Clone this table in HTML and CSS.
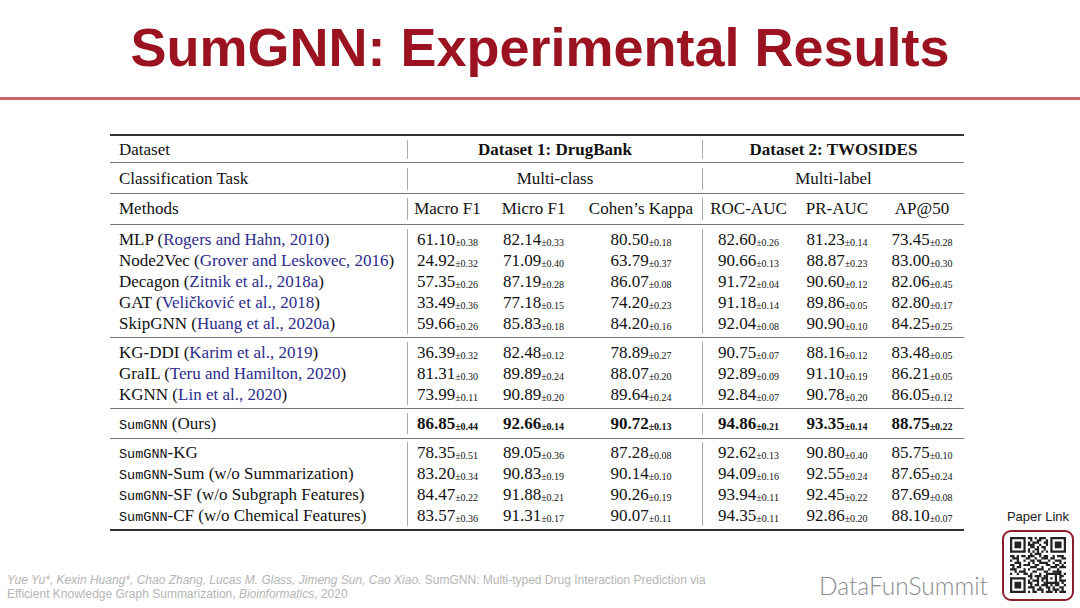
FILE: index.html
```html
<!DOCTYPE html>
<html lang="en">
<head>
<meta charset="utf-8">
<title>SumGNN: Experimental Results</title>
<link rel="stylesheet" href="styles.css">
</head>
<body>
<header class="head"><h1>SumGNN: Experimental Results</h1></header>
<div class="stage">
  <main class="main">
    <div class="tbl">
      <div class="sec sa">
        <div class="m">Dataset</div>
        <div class="span3 b"><b>Dataset 1: DrugBank</b></div>
        <div class="span3 b"><b>Dataset 2: TWOSIDES</b></div>
      </div>
      <div class="sec sb">
        <div class="m">Classification Task</div>
        <div class="span3 b">Multi-class</div>
        <div class="span3 b">Multi-label</div>
      </div>
      <div class="sec sc">
        <div class="m">Methods</div>
        <div class="b">Macro F1</div><div>Micro F1</div><div>Cohen’s Kappa</div>
        <div class="b">ROC-AUC</div><div>PR-AUC</div><div>AP@50</div>
      </div>
      <div class="sec sd">
        <div class="m">MLP (<span class="ref">Rogers and Hahn, 2010</span>)</div>
        <div class="b">61.10<span class="pm">±0.38</span></div><div>82.14<span class="pm">±0.33</span></div><div>80.50<span class="pm">±0.18</span></div>
        <div class="b">82.60<span class="pm">±0.26</span></div><div>81.23<span class="pm">±0.14</span></div><div>73.45<span class="pm">±0.28</span></div>

        <div class="m">Node2Vec (<span class="ref">Grover and Leskovec, 2016</span>)</div>
        <div class="b">24.92<span class="pm">±0.32</span></div><div>71.09<span class="pm">±0.40</span></div><div>63.79<span class="pm">±0.37</span></div>
        <div class="b">90.66<span class="pm">±0.13</span></div><div>88.87<span class="pm">±0.23</span></div><div>83.00<span class="pm">±0.30</span></div>

        <div class="m">Decagon (<span class="ref">Zitnik et al., 2018a</span>)</div>
        <div class="b">57.35<span class="pm">±0.26</span></div><div>87.19<span class="pm">±0.28</span></div><div>86.07<span class="pm">±0.08</span></div>
        <div class="b">91.72<span class="pm">±0.04</span></div><div>90.60<span class="pm">±0.12</span></div><div>82.06<span class="pm">±0.45</span></div>

        <div class="m">GAT (<span class="ref">Veličković et al., 2018</span>)</div>
        <div class="b">33.49<span class="pm">±0.36</span></div><div>77.18<span class="pm">±0.15</span></div><div>74.20<span class="pm">±0.23</span></div>
        <div class="b">91.18<span class="pm">±0.14</span></div><div>89.86<span class="pm">±0.05</span></div><div>82.80<span class="pm">±0.17</span></div>

        <div class="m">SkipGNN (<span class="ref">Huang et al., 2020a</span>)</div>
        <div class="b">59.66<span class="pm">±0.26</span></div><div>85.83<span class="pm">±0.18</span></div><div>84.20<span class="pm">±0.16</span></div>
        <div class="b">92.04<span class="pm">±0.08</span></div><div>90.90<span class="pm">±0.10</span></div><div>84.25<span class="pm">±0.25</span></div>
      </div>
      <div class="sec se">
        <div class="m">KG-DDI (<span class="ref">Karim et al., 2019</span>)</div>
        <div class="b">36.39<span class="pm">±0.32</span></div><div>82.48<span class="pm">±0.12</span></div><div>78.89<span class="pm">±0.27</span></div>
        <div class="b">90.75<span class="pm">±0.07</span></div><div>88.16<span class="pm">±0.12</span></div><div>83.48<span class="pm">±0.05</span></div>

        <div class="m">GraIL (<span class="ref">Teru and Hamilton, 2020</span>)</div>
        <div class="b">81.31<span class="pm">±0.30</span></div><div>89.89<span class="pm">±0.24</span></div><div>88.07<span class="pm">±0.20</span></div>
        <div class="b">92.89<span class="pm">±0.09</span></div><div>91.10<span class="pm">±0.19</span></div><div>86.21<span class="pm">±0.05</span></div>

        <div class="m">KGNN (<span class="ref">Lin et al., 2020</span>)</div>
        <div class="b">73.99<span class="pm">±0.11</span></div><div>90.89<span class="pm">±0.20</span></div><div>89.64<span class="pm">±0.24</span></div>
        <div class="b">92.84<span class="pm">±0.07</span></div><div>90.78<span class="pm">±0.20</span></div><div>86.05<span class="pm">±0.12</span></div>
      </div>
      <div class="sec sf">
        <div class="m"><span class="tt">SumGNN</span> (Ours)</div>
        <div class="b v">86.85<span class="pm">±0.44</span></div><div class="v">92.66<span class="pm">±0.14</span></div><div class="v">90.72<span class="pm">±0.13</span></div>
        <div class="b v">94.86<span class="pm">±0.21</span></div><div class="v">93.35<span class="pm">±0.14</span></div><div class="v">88.75<span class="pm">±0.22</span></div>
      </div>
      <div class="sec sg">
        <div class="m"><span class="tt">SumGNN</span>-KG</div>
        <div class="b">78.35<span class="pm">±0.51</span></div><div>89.05<span class="pm">±0.36</span></div><div>87.28<span class="pm">±0.08</span></div>
        <div class="b">92.62<span class="pm">±0.13</span></div><div>90.80<span class="pm">±0.40</span></div><div>85.75<span class="pm">±0.10</span></div>

        <div class="m"><span class="tt">SumGNN</span>-Sum (w/o Summarization)</div>
        <div class="b">83.20<span class="pm">±0.34</span></div><div>90.83<span class="pm">±0.19</span></div><div>90.14<span class="pm">±0.10</span></div>
        <div class="b">94.09<span class="pm">±0.16</span></div><div>92.55<span class="pm">±0.24</span></div><div>87.65<span class="pm">±0.24</span></div>

        <div class="m"><span class="tt">SumGNN</span>-SF (w/o Subgraph Features)</div>
        <div class="b">84.47<span class="pm">±0.22</span></div><div>91.88<span class="pm">±0.21</span></div><div>90.26<span class="pm">±0.19</span></div>
        <div class="b">93.94<span class="pm">±0.11</span></div><div>92.45<span class="pm">±0.22</span></div><div>87.69<span class="pm">±0.08</span></div>

        <div class="m"><span class="tt">SumGNN</span>-CF (w/o Chemical Features)</div>
        <div class="b">83.57<span class="pm">±0.36</span></div><div>91.31<span class="pm">±0.17</span></div><div>90.07<span class="pm">±0.11</span></div>
        <div class="b">94.35<span class="pm">±0.11</span></div><div>92.86<span class="pm">±0.20</span></div><div>88.10<span class="pm">±0.07</span></div>
      </div>
    </div>
    <footer class="foot">
      <p class="cite"><i>Yue Yu*, Kexin Huang*, Chao Zhang, Lucas M. Glass, Jimeng Sun, Cao Xiao.</i> SumGNN: Multi-typed Drug Interaction Prediction via<br>Efficient Knowledge Graph Summarization, <i>Bioinformatics</i>, 2020</p>
      <div class="brand">DataFunSummit</div>
    </footer>
  </main>
  <aside class="link">
    <div class="plabel">Paper Link</div>
    <div class="qr">
      <svg width="56" height="56" viewBox="0 0 25 25" aria-hidden="true">
        <path fill="#222" fill-rule="evenodd" d="M0 0h7v7h-7zM1 1v5h5v-5zM2 2h3v3h-3zM18 0h7v7h-7zM19 1v5h5v-5zM20 2h3v3h-3zM0 18h7v7h-7zM1 19v5h5v-5zM2 20h3v3h-3zM16 16h5v5h-5zM17 17v3h3v-3zM18 18h1v1h-1z"/>
        <path fill="#222" d="M8 0h2v1h-2zM11 0h1v1h-1zM13 0h3v1h-3zM9 1h1v1h-1zM12 1h2v1h-2zM16 1h1v1h-1zM8 2h1v1h-1zM10 2h3v1h-3zM15 2h2v1h-2zM8 3h3v1h-3zM13 3h1v1h-1zM16 3h1v1h-1zM9 4h2v1h-2zM12 4h1v1h-1zM14 4h2v1h-2zM8 5h1v1h-1zM11 5h2v1h-2zM15 5h1v1h-1zM8 6h1v1h-1zM10 6h1v1h-1zM12 6h1v1h-1zM14 6h1v1h-1zM16 6h1v1h-1zM9 7h1v1h-1zM11 7h3v1h-3zM0 8h2v1h-2zM3 8h1v1h-1zM5 8h2v1h-2zM8 8h3v1h-3zM13 8h1v1h-1zM15 8h2v1h-2zM19 8h1v1h-1zM21 8h3v1h-3zM1 9h3v1h-3zM7 9h2v1h-2zM11 9h1v1h-1zM14 9h3v1h-3zM18 9h2v1h-2zM23 9h2v1h-2zM0 10h1v1h-1zM3 10h1v1h-1zM6 10h1v1h-1zM9 10h2v1h-2zM12 10h2v1h-2zM17 10h1v1h-1zM20 10h3v1h-3zM2 11h3v1h-3zM8 11h1v1h-1zM10 11h1v1h-1zM13 11h4v1h-4zM19 11h1v1h-1zM22 11h1v1h-1zM24 11h1v1h-1zM0 12h2v1h-2zM4 12h1v1h-1zM6 12h3v1h-3zM11 12h2v1h-2zM16 12h2v1h-2zM20 12h2v1h-2zM23 12h1v1h-1zM1 13h1v1h-1zM3 13h2v1h-2zM9 13h3v1h-3zM14 13h1v1h-1zM18 13h3v1h-3zM22 13h3v1h-3zM0 14h3v1h-3zM6 14h1v1h-1zM8 14h1v1h-1zM12 14h3v1h-3zM17 14h1v1h-1zM21 14h1v1h-1zM2 15h1v1h-1zM4 15h3v1h-3zM10 15h2v1h-2zM15 15h2v1h-2zM19 15h4v1h-4zM0 16h1v1h-1zM3 16h1v1h-1zM6 16h2v1h-2zM9 16h1v1h-1zM13 16h1v1h-1zM21 16h2v1h-2zM24 16h1v1h-1zM8 17h2v1h-2zM11 17h3v1h-3zM15 17h1v1h-1zM22 17h2v1h-2zM9 18h1v1h-1zM12 18h1v1h-1zM14 18h2v1h-2zM22 18h1v1h-1zM8 19h1v1h-1zM10 19h3v1h-3zM14 19h1v1h-1zM22 19h3v1h-3zM8 20h2v1h-2zM12 20h1v1h-1zM15 20h1v1h-1zM21 20h1v1h-1zM23 20h1v1h-1zM9 21h1v1h-1zM11 21h2v1h-2zM14 21h3v1h-3zM18 21h1v1h-1zM20 21h2v1h-2zM24 21h1v1h-1zM8 22h3v1h-3zM13 22h1v1h-1zM16 22h2v1h-2zM19 22h1v1h-1zM22 22h2v1h-2zM10 23h1v1h-1zM12 23h3v1h-3zM17 23h1v1h-1zM19 23h3v1h-3zM23 23h1v1h-1zM8 24h1v1h-1zM10 24h2v1h-2zM14 24h1v1h-1zM16 24h3v1h-3zM20 24h1v1h-1zM22 24h3v1h-3z"/>
      </svg>
    </div>
  </aside>
</div>
</body>
</html>
```
FILE: styles.css
```css
html, body {
  margin: 0;
  padding: 0;
}
body {
  width: 1080px;
  height: 608px;
  overflow: hidden;
  background: #ffffff;
  font-family: "Liberation Serif", "Times New Roman", serif;
}

/* title */
.head {
  height: 81px;
  padding-top: 16px;
  border-bottom: 3px solid #c7646e;
}
.head h1 {
  margin: 0;
  text-align: center;
  font-family: "Liberation Sans", Arial, sans-serif;
  font-weight: bold;
  font-size: 54px;
  line-height: 62px;
  color: #9b1221;
}

/* page body */
.stage {
  display: flex;
  height: 508px;
}
.main {
  width: 1002px;
  padding: 34px 0 7px;
  box-sizing: border-box;
  display: flex;
  flex-direction: column;
}

/* table */
.tbl {
  margin-left: 110px;
  width: 854px;
  border-top: 2px solid #333;
  border-bottom: 2px solid #333;
  color: #111;
  font-size: 17px;
}
.sec {
  display: grid;
  grid-template-columns: 297px 80px 93px 122px 92px 86px 84px;
  padding: 4px 0 3px;
  border-bottom: 1px solid #777;
}
.sec:last-child {
  border-bottom: 0;
}
.sec > div {
  height: 21px;
  line-height: 21px;
  text-align: center;
  white-space: nowrap;
  box-sizing: border-box;
}
.sec > .m {
  text-align: left;
  padding-left: 9px;
}
.sec > .b {
  border-left: 1px solid #aaa;
}
.span3 {
  grid-column: span 3;
}
.sa > div {
  height: 19px;
  line-height: 19px;
}
.sb {
  padding: 5px 0 3px;
}
.sb > div,
.sc > div {
  height: 22px;
  line-height: 22px;
}
.sc {
  padding: 4px 0;
}
.sf {
  padding: 4px 0;
}
.sg {
  padding: 3px 0;
}
.sf > .v {
  font-weight: bold;
}
.pm {
  font-size: 10px;
  vertical-align: -1px;
}
.ref {
  color: #2c2c8c;
}
.tt {
  font-family: "Liberation Mono", "DejaVu Sans Mono", monospace;
  font-size: 13.5px;
}

/* footer */
.foot {
  margin-top: auto;
  display: flex;
  justify-content: space-between;
  align-items: flex-end;
  padding: 0 14px 0 7px;
}
.cite {
  margin: 0;
  font-family: "Liberation Sans", Arial, sans-serif;
  font-size: 12px;
  line-height: 14px;
  color: #b5b5b5;
  white-space: nowrap;
}
.brand {
  font-family: Lato, "Open Sans", sans-serif;
  font-weight: 300;
  font-size: 24.5px;
  line-height: 25px;
  color: #8c8c8c;
  margin-bottom: 3px;
}

/* paper link */
.link {
  width: 72px;
  display: flex;
  flex-direction: column;
  align-items: center;
  justify-content: flex-end;
  padding-bottom: 7px;
}
.plabel {
  font-family: "Liberation Sans", Arial, sans-serif;
  font-size: 13px;
  line-height: 15px;
  color: #222;
  margin-bottom: 6px;
}
.qr {
  width: 56px;
  height: 57px;
  padding: 5px 6px;
  border: 2px solid #8c1d2c;
  border-radius: 9px;
}
.qr svg {
  display: block;
}
```
